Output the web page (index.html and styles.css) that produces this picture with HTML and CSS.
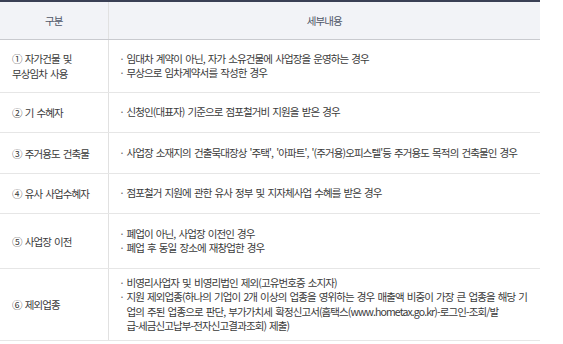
FILE: index.html
```html
<!DOCTYPE html>
<html lang="ko">
<head>
<meta charset="utf-8">
<link rel="stylesheet" href="styles.css">
</head>
<body>
<table class="tbl">
  <colgroup><col class="c1"><col class="c2"></colgroup>
  <thead>
    <tr><th>구분</th><th>세부내용</th></tr>
  </thead>
  <tbody>
    <tr class="r1">
      <td class="lab">① 자가건물 및<br>무상임차 사용</td>
      <td><ul class="list"><li>임대차 계약이 아닌, 자가 소유건물에 사업장을 운영하는 경우</li><li>무상으로 임차계약서를 작성한 경우</li></ul></td>
    </tr>
    <tr class="r2">
      <td class="lab">② 기 수혜자</td>
      <td><ul class="list"><li>신청인(대표자) 기준으로 점포철거비 지원을 받은 경우</li></ul></td>
    </tr>
    <tr class="r3">
      <td class="lab">③ 주거용도 건축물</td>
      <td><ul class="list"><li>사업장 소재지의 건출묵대장상 '주택', '아파트', '(주거용)오피스텔'등 주거용도 목적의 건축물인 경우</li></ul></td>
    </tr>
    <tr class="r4">
      <td class="lab">④ 유사 사업수혜자</td>
      <td><ul class="list"><li>점포철거 지원에 관한 유사 정부 및 지자체사업 수혜를 받은 경우</li></ul></td>
    </tr>
    <tr class="r5">
      <td class="lab">⑤ 사업장 이전</td>
      <td><ul class="list"><li>폐업이 아닌, 사업장 이전인 경우</li><li>폐업 후 동일 장소에 재창업한 경우</li></ul></td>
    </tr>
    <tr class="r6">
      <td class="lab">⑥ 제외업종</td>
      <td><ul class="list wrap"><li>비영리사업자 및 비영리법인 제외(고유번호증 소지자)</li><li>지원 제외업종(하나의 기업이 2개 이상의 업종을 영위하는 경우 매출액 비중이 가장 큰 업종을 해당 기<br>업의 주된 업종으로 판단, 부가가치세 확정신고서(홈택스(www.hometax.go.kr)-로그인-조회/발<br>급-세금신고납부-전자신고결과조회) 제출)</li></ul></td>
    </tr>
  </tbody>
</table>
</body>
</html>
```

FILE: styles.css
```css
html, body {
  margin: 0;
  padding: 0;
  background: #ffffff;
}
body {
  font-family: "Noto Sans CJK KR", "Noto Sans", sans-serif;
  font-size: 10.5px;
  letter-spacing: -0.9px;
  word-spacing: 1px;
  color: #3a3a3a;
}
.tbl {
  width: 540px;
  border-collapse: collapse;
  table-layout: fixed;
  border-top: 2px solid #3a4055;
}
.c1 { width: 108px; }
.tbl th {
  height: 37px;
  padding: 0;
  background: #f2f3f7;
  border-bottom: 1px solid #c9cacf;
  font-weight: normal;
  color: #4f5668;
  text-align: center;
  vertical-align: middle;
}
.tbl th:first-child,
.tbl td:first-child {
  border-right: 1px solid #e1e1e1;
}
.tbl td {
  padding: 0;
  border-bottom: 1px solid #e6e6e6;
  vertical-align: middle;
}
.tbl td.lab {
  padding-left: 12px;
  line-height: 15px;
}
.r1 td { height: 52px; }
.r2 td { height: 39px; }
.r3 td { height: 40px; }
.r4 td { height: 39px; }
.r5 td { height: 54px; }
.r6 td { height: 71px; }
.list {
  list-style: none;
  margin: 0;
  padding: 0 10px 0 12px;
  line-height: 14.5px;
}
.list.wrap {
  white-space: nowrap;
}
.list li {
  padding-left: 6px;
  position: relative;
}
.list li::before {
  content: "·";
  position: absolute;
  left: 0;
  top: 0;
  color: #666;
}
```
